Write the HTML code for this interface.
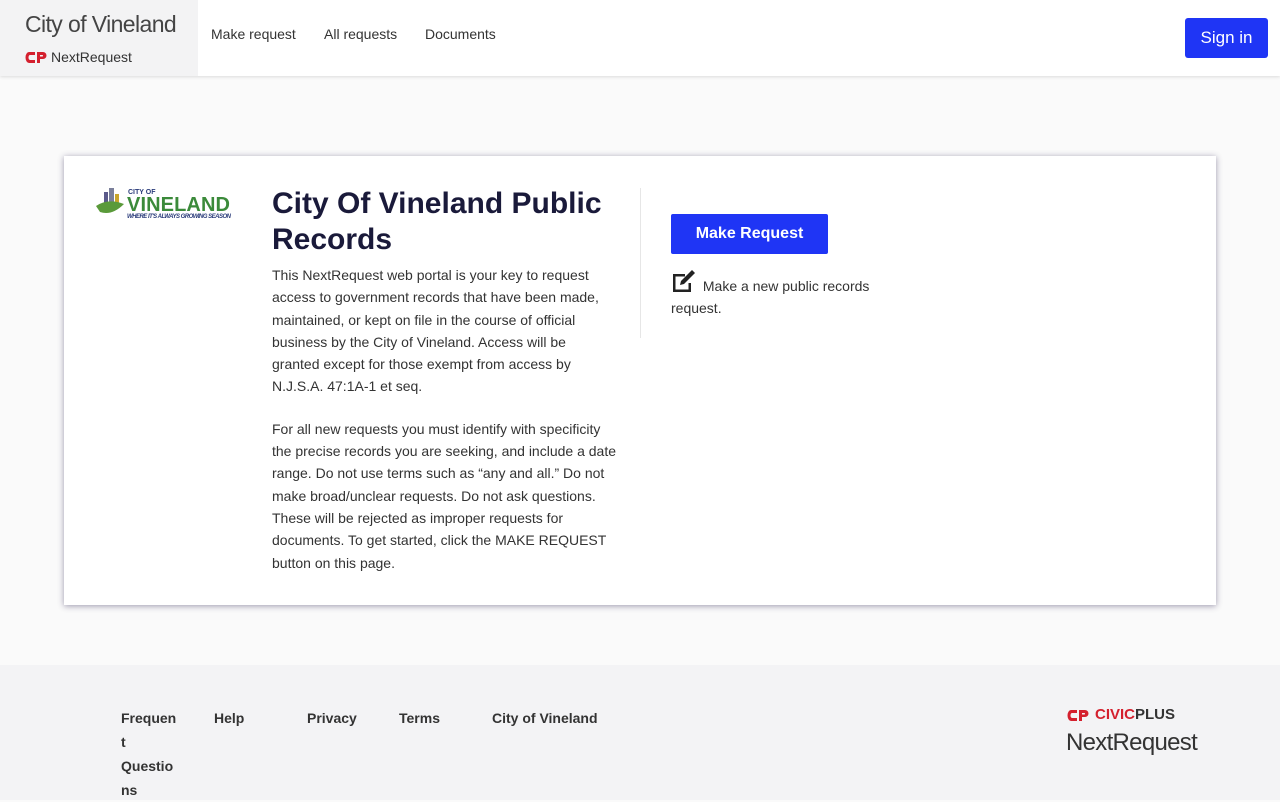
<!DOCTYPE html>
<html><head><meta charset="utf-8"><style>
*{box-sizing:border-box;margin:0;padding:0}
body{width:1280px;height:800px;overflow:hidden;background:#fafafa;font-family:"Liberation Sans",sans-serif;color:#222;position:relative}
.hdr{position:absolute;left:0;top:0;width:1280px;height:76px;background:#fff;box-shadow:0 1px 3px rgba(0,0,0,.12)}
.brand{position:absolute;left:0;top:0;width:198px;height:76px;background:#f3f3f4}
.brand .t{position:absolute;left:25px;top:11px;font-size:23px;color:#444;letter-spacing:-.6px}
.brand .n{position:absolute;left:51px;top:49px;font-size:14px;color:#333}
.nav{position:absolute;top:26px;font-size:14px;color:#333}
.signin{position:absolute;left:1185px;top:18px;width:83px;height:40px;background:#1f35f5;color:#fff;font-size:17px;border-radius:3px;text-align:center;line-height:40px}
.card{position:absolute;left:64px;top:156px;width:1152px;height:449px;background:#fff;box-shadow:0 1px 6px rgba(40,30,80,.45)}
h1{position:absolute;left:208px;top:30px;width:360px;font-size:30px;line-height:36px;color:#1a1a3a;font-weight:bold}
.body{position:absolute;left:208px;top:108px;width:345px;font-size:14px;line-height:22.3px;color:#333}
.body p{margin-bottom:20px}
.div{position:absolute;left:576px;top:32px;width:1px;height:150px;background:#e6e6e6}
.btn{position:absolute;left:607px;top:58px;width:157px;height:40px;background:#1f35f5;color:#fff;font-weight:bold;font-size:16px;text-align:center;line-height:40px;border-radius:2px}
.mk{position:absolute;left:607px;top:114px;width:230px;font-size:14px;line-height:22px;color:#333}
.foot{position:absolute;left:0;top:665px;width:1280px;height:135px;background:#f3f3f5}
.fl{position:absolute;top:41px;font-size:14px;font-weight:bold;color:#333;line-height:24px}
</style></head><body>
<div class="hdr">
<div class="brand"><div class="t">City of Vineland</div>
<svg style="position:absolute;left:25px;top:51px" width="22" height="13" viewBox="0 0 22 13"><path d="M10 1H4a3.5 5.5 0 0 0 0 11h6V9H5a1.5 2.5 0 0 1 0-5h5z" fill="#d4202e"/><path d="M12 1h6a3.5 3.5 0 0 1 0 7h-3v4h-3z M15 4v1.5h2.5a.8.8 0 0 0 0-1.5z" fill="#d4202e" fill-rule="evenodd"/></svg>
<div class="n">NextRequest</div></div>
<div class="nav" style="left:211px">Make request</div>
<div class="nav" style="left:324px">All requests</div>
<div class="nav" style="left:425px">Documents</div>
<div class="signin">Sign in</div>
</div>
<div class="card">
<svg style="position:absolute;left:30px;top:30px" width="140" height="36" viewBox="0 0 140 36">
<rect x="10" y="6" width="4" height="14" fill="#5b5a8a"/><rect x="15" y="2" width="5" height="18" fill="#7a7f9a"/><rect x="21" y="8" width="4" height="12" fill="#c9a52b"/>
<path d="M2 20 Q14 12 30 18 Q18 30 6 26Z" fill="#5a9a3a"/>
<text x="34" y="8" font-size="7" font-weight="bold" fill="#2a3b7a" font-family="Liberation Sans">CITY OF</text>
<text x="33" y="25" font-size="20" font-weight="bold" fill="#3b8a3a" font-family="Liberation Sans" textLength="103">VINELAND</text>
<text x="33" y="32" font-size="6" font-style="italic" font-weight="bold" fill="#2a3b7a" font-family="Liberation Sans" textLength="104">WHERE IT'S ALWAYS GROWING SEASON</text>
</svg>
<h1>City Of Vineland Public Records</h1>
<div class="body"><p>This NextRequest web portal is your key to request access to government records that have been made, maintained, or kept on file in the course of official business by the City of Vineland. Access will be granted except for those exempt from access by N.J.S.A. 47:1A-1 et seq.</p>
<p>For all new requests you must identify with specificity the precise records you are seeking, and include a date range. Do not use terms such as “any and all.” Do not make broad/unclear requests. Do not ask questions. These will be rejected as improper requests for documents. To get started, click the MAKE REQUEST button on this page.</p></div>
<div class="div"></div>
<div class="btn">Make Request</div>
<div class="mk"><svg width="28" height="24" viewBox="0 0 28 24" style="vertical-align:-3px"><path d="M2 4h12v2.5H4.5v13h13V13H20v9H2z" fill="#222"/><path d="M9 15l1-4 11-11 3 3-11 11z" fill="#222"/></svg> Make a new public records request.</div>
</div>
<div class="foot">
<div class="fl" style="left:121px">Frequen<br>t<br>Questio<br>ns</div>
<div class="fl" style="left:214px">Help</div>
<div class="fl" style="left:307px">Privacy</div>
<div class="fl" style="left:399px">Terms</div>
<div class="fl" style="left:492px">City of Vineland</div>
<svg style="position:absolute;left:1067px;top:44px" width="22" height="13" viewBox="0 0 22 13"><path d="M10 1H4a3.5 5.5 0 0 0 0 11h6V9H5a1.5 2.5 0 0 1 0-5h5z" fill="#d4202e"/><path d="M12 1h6a3.5 3.5 0 0 1 0 7h-3v4h-3z M15 4v1.5h2.5a.8.8 0 0 0 0-1.5z" fill="#d4202e" fill-rule="evenodd"/></svg>
<div style="position:absolute;left:1095px;top:41px;font-size:15px;font-weight:bold;color:#d4202e">CIVIC<span style="color:#333">PLUS</span></div>
<div style="position:absolute;left:1066px;top:64px;font-size:24px;color:#333;letter-spacing:-.7px">NextRequest</div>
</div>
</body></html>
